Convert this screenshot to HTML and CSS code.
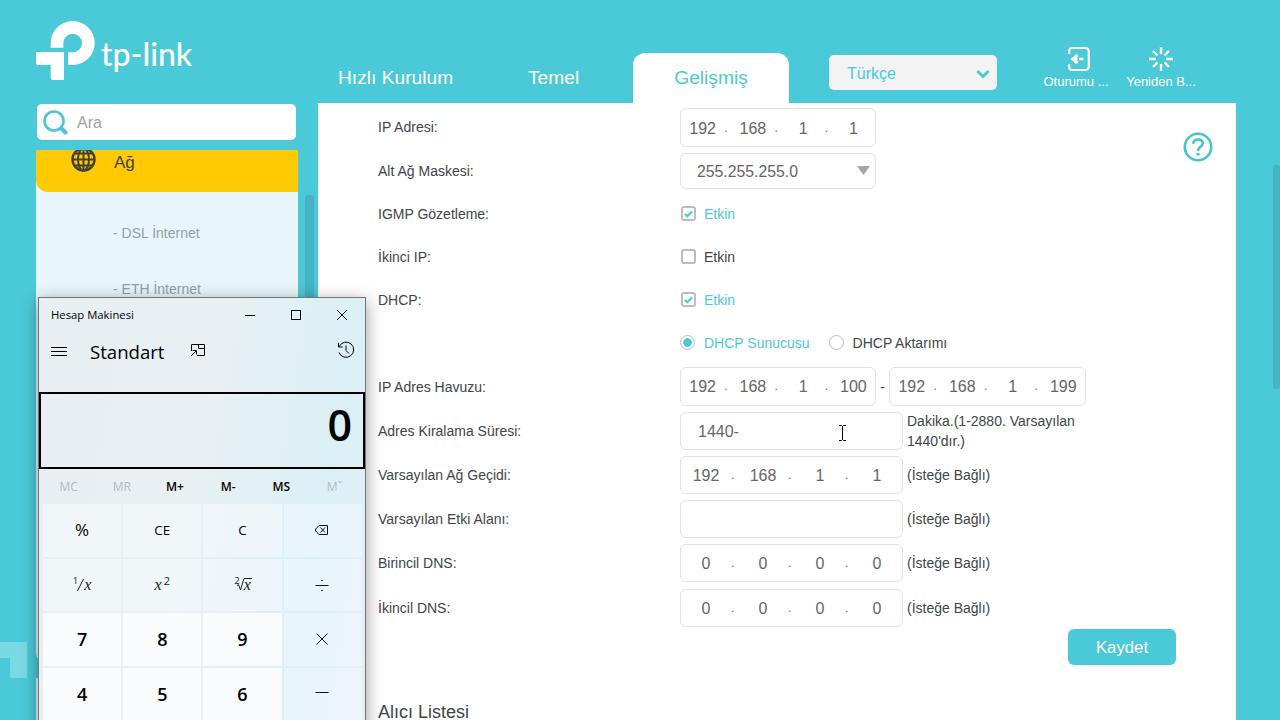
FILE: index.html
```html
<!DOCTYPE html>
<html lang="tr">
	<head>
		<meta charset="UTF-8">
		<meta content="width=device-width, initial-scale=1.0" name="viewport">
		<link rel="stylesheet" href="styles.css">
		<title>tp-link</title>
	</head>
	<body>
		<div class="page">
			<svg class="bg-mark" width="27" height="36" viewBox="0 0 27 36"><path d="M0 0H27V36H12Q10 36 10 34V16H0Z" fill="#7ADAE3"/></svg>
			<aside class="sidebar">
				<div class="logo">
					<svg width="60" height="60" viewBox="36 21 60 60" fill="#FFF">
						<path d="M50.7 47.7V43A22 22 0 1 1 72.7 65H68V52.3H72.7A9.3 9.3 0 1 0 63.4 43V47.7Z"/>
						<path d="M36 52H64V80H52.7Q50.7 80 50.7 78V65H38Q36 65 36 63Z"/>
					</svg>
					<span class="logo-text">tp-link</span>
				</div>
				<div class="search">
					<svg width="25" height="25" viewBox="0 0 25 25" fill="none" stroke="#4AC6D4"><circle cx="11" cy="11" r="9.5" stroke-width="2.6"/><path d="M18.5 18.5L22.5 22.5" stroke-width="4" stroke-linecap="round"/></svg>
					<span>Ara</span>
				</div>
				<nav class="menu">
					<div class="menu-head">
						<svg width="25" height="25" viewBox="0 0 25 25" fill="none" stroke="#3F4330" stroke-width="2"><circle cx="12.5" cy="12.5" r="11" stroke-width="2.4"/><ellipse cx="12.5" cy="12.5" rx="5.5" ry="11"/><path d="M12.5 1V24M1 12.5H24M3 6.5H22M3 18.5H22"/></svg>
						<span>Ağ</span>
					</div>
					<div class="menu-sub">
						<a>- DSL İnternet</a>
						<a>- ETH İnternet</a>
					</div>
				</nav>
				<div class="menu-next"></div>
			</aside>

			<main class="main">
				<header class="topbar">
					<a class="tab tab-quick">Hızlı Kurulum</a>
					<a class="tab tab-basic">Temel</a>
					<a class="tab tab-active">Gelişmiş</a>
					<div class="language">
						<span>Türkçe</span>
						<svg width="14" height="10" viewBox="0 0 14 10" fill="none" stroke="#4ACAD8" stroke-width="3"><path d="M1.5 2L7 7.5L12.5 2"/></svg>
					</div>
					<div class="action action-logout">
						<svg width="22" height="26" viewBox="0 0 22 26" fill="none" stroke="#FFF" stroke-width="2.2"><path d="M1.2 8V5Q1.2 2 4.2 2H17Q20.8 2 20.8 6V20Q20.8 24 17 24H4.2Q1.2 24 1.2 21V18"/><path d="M9.5 9L5 13L9.5 17" stroke-width="3.2"/><path d="M5 13H9.5M11 13H15.5" stroke-width="2.4"/></svg>
						<span>Oturumu ...</span>
					</div>
					<div class="action action-reboot">
						<svg width="26" height="26" viewBox="0 0 26 26" stroke="#FFF" stroke-width="2.4"><path d="M13 1V8M13 18V25M1 13H8M18 13H25M5 5L9.5 9.5M16.5 16.5L21 21M5 21L9.5 16.5M16.5 9.5L21 5"/></svg>
						<span>Yeniden B...</span>
					</div>
				</header>

				<section class="content">
					<div class="form">
						<div class="row row-up">
							<label>IP Adresi:</label>
							<div class="field ip"><b>192</b><i>.</i><b>168</b><i>.</i><b>1</b><i>.</i><b>1</b></div>
						</div>
						<div class="row">
							<label>Alt Ağ Maskesi:</label>
							<div class="field select"><span>255.255.255.0</span><svg width="13" height="9" viewBox="0 0 13 9"><path d="M0 0H13L6.5 9Z" fill="#A5A5A5"/></svg></div>
						</div>
						<div class="row row-up">
							<label>IGMP Gözetleme:</label>
							<span class="check checked"><svg width="9" height="8" viewBox="0 0 9 8"><path d="M1 4L3.3 6.2L8 1.5"/></svg></span><span class="option on">Etkin</span>
						</div>
						<div class="row row-up">
							<label>İkinci IP:</label>
							<span class="check"></span><span class="option">Etkin</span>
						</div>
						<div class="row row-up">
							<label>DHCP:</label>
							<span class="check checked"><svg width="9" height="8" viewBox="0 0 9 8"><path d="M1 4L3.3 6.2L8 1.5"/></svg></span><span class="option on">Etkin</span>
						</div>
						<div class="row row-up">
							<label></label>
							<span class="radio selected"></span><span class="option on server">DHCP Sunucusu</span>
							<span class="radio"></span><span class="option">DHCP Aktarımı</span>
						</div>
						<div class="row row-pool">
							<label>IP Adres Havuzu:</label>
							<div class="field ip"><b>192</b><i>.</i><b>168</b><i>.</i><b>1</b><i>.</i><b>100</b></div>
							<span class="dash">-</span>
							<div class="field ip last"><b>192</b><i>.</i><b>168</b><i>.</i><b>1</b><i>.</i><b>199</b></div>
						</div>
						<div class="row">
							<label>Adres Kiralama Süresi:</label>
							<div class="field wide text">1440-</div>
							<span class="note">Dakika.(1-2880. Varsayılan 1440'dır.)</span>
						</div>
						<div class="row row-gateway">
							<label>Varsayılan Ağ Geçidi:</label>
							<div class="field wide ip"><b>192</b><i>.</i><b>168</b><i>.</i><b>1</b><i>.</i><b>1</b></div>
							<span class="note">(İsteğe Bağlı)</span>
						</div>
						<div class="row">
							<label>Varsayılan Etki Alanı:</label>
							<div class="field wide text"></div>
							<span class="note">(İsteğe Bağlı)</span>
						</div>
						<div class="row">
							<label>Birincil DNS:</label>
							<div class="field wide ip"><b>0</b><i>.</i><b>0</b><i>.</i><b>0</b><i>.</i><b>0</b></div>
							<span class="note">(İsteğe Bağlı)</span>
						</div>
						<div class="row">
							<label>İkincil DNS:</label>
							<div class="field wide ip"><b>0</b><i>.</i><b>0</b><i>.</i><b>0</b><i>.</i><b>0</b></div>
							<span class="note">(İsteğe Bağlı)</span>
						</div>
					</div>
					<button class="save" type="button">Kaydet</button>
					<h2>Alıcı Listesi</h2>
					<svg class="help" width="30" height="30" viewBox="0 0 30 30" fill="none" stroke="#4AC3D0" stroke-width="2.6"><circle cx="15" cy="15" r="13.2"/><path d="M10.2 11.8Q10.4 7.5 15 7.5Q19.8 7.5 19.8 11.3Q19.8 13.4 17.4 14.9Q15 16.4 15 19"/><path d="M15 21V23.6" stroke-width="3"/></svg>
				</section>
			</main>
			<div class="scroll scroll-menu"></div>
			<div class="scroll scroll-page"></div>
		</div>

		<div class="calculator">
			<div class="calc-title">
				<span>Hesap Makinesi</span>
				<svg width="104" height="12" viewBox="0 0 104 12" fill="none" stroke="#000"><path d="M1 6.5H11"/><rect x="47.5" y="1.5" width="9" height="9"/><path d="M93 1L103 11M103 1L93 11"/></svg>
			</div>
			<div class="calc-mode">
				<svg width="16" height="11" viewBox="0 0 16 11" stroke="#000"><path d="M0 1.5H16M0 5.5H16M0 9.5H16"/></svg>
				<span>Standart</span>
				<svg class="on-top" width="16" height="14" viewBox="0 0 16 14" fill="none" stroke="#000"><path d="M1.5 8V1.5H14.5V12.5H7M8.5 1.5V5.5H14.5M1 13L6 8M2.5 7.5H6.5V11.5"/></svg>
				<svg class="history" width="18" height="18" viewBox="0 0 18 18" fill="none" stroke="#000"><path d="M2.2 5.5A7.6 7.6 0 1 1 2 11.5M1.5 1.8V6H5.7M9 4.5V9.5L12 12.5"/></svg>
			</div>
			<div class="calc-display">0</div>
			<div class="calc-memory">
				<span class="off">MC</span><span class="off">MR</span><span>M+</span><span>M-</span><span>MS</span><span class="off">M<small>ˇ</small></span>
			</div>
			<div class="calc-keys">
				<div class="key percent">%</div>
				<div class="key">CE</div>
				<div class="key">C</div>
				<div class="key op"><svg width="15" height="12" viewBox="0 0 15 12" fill="none" stroke="#111"><path d="M5 1.5H13.5V10.5H5L1 6ZM6.5 3.5L11 8.5M11 3.5L6.5 8.5"/></svg></div>
				<div class="key math"><sup>1</sup><svg class="slash" width="7" height="12" viewBox="0 0 7 12" stroke="#222"><path d="M0.5 12L6.5 0"/></svg><em>x</em></div>
				<div class="key math square"><em>x</em><sup>2</sup></div>
				<div class="key math"><sup>2</sup><svg class="root" width="15" height="13" viewBox="0 0 15 13" fill="none" stroke="#222"><path d="M0 7.5L1.5 6.5L3.5 12L7 0.5H15"/></svg><em class="under-root">x</em></div>
				<div class="key op"><svg width="14" height="14" viewBox="0 0 14 14" stroke="#111" fill="#111"><path d="M0.5 7.5H13.5"/><circle cx="7" cy="2.5" r="0.4"/><circle cx="7" cy="12.5" r="0.4"/></svg></div>
				<div class="key num">7</div>
				<div class="key num">8</div>
				<div class="key num">9</div>
				<div class="key op"><svg width="12" height="12" viewBox="0 0 12 12" stroke="#111"><path d="M0.5 0.5L11.5 11.5M11.5 0.5L0.5 11.5"/></svg></div>
				<div class="key num">4</div>
				<div class="key num">5</div>
				<div class="key num">6</div>
				<div class="key op"><svg width="14" height="3" viewBox="0 0 14 3" stroke="#111"><path d="M0.5 0.5H13.5"/></svg></div>
			</div>
		</div>
		<svg class="cursor" width="7" height="16" viewBox="0 0 7 16" fill="none" stroke="#000"><path d="M0 0.5H2.5L3.5 1.5L4.5 0.5H7M3.5 1V15M0 15.5H2.5L3.5 14.5L4.5 15.5H7"/></svg>
	</body>
</html>
```
FILE: styles.css
```css
* {
    box-sizing: border-box;
}

body {
    position: relative;
    margin: 0;
    width: 1280px;
    height: 720px;
    overflow: hidden;
    background-color: #4ACAD8;
    font-family: 'Liberation Sans', Arial, sans-serif;
    font-size: 14px;
    color: #404548;
}

svg {
    display: block;
    flex: none;
}

.page {
    display: flex;
    height: 720px;
}

.bg-mark {
    position: absolute;
    left: 0;
    top: 642px;
}

/* sidebar */
.sidebar {
    display: flex;
    flex-direction: column;
    width: 318px;
    padding-left: 36px;
}

.logo {
    display: flex;
    height: 104px;
    padding-top: 21px;
}

.logo-text {
    margin: 10px 0 0 5px;
    color: #FFF;
    font-family: Lato, sans-serif;
    font-size: 32px;
    line-height: 46px;
    font-weight: 500;
}

.search {
    display: flex;
    align-items: center;
    width: 259px;
    height: 36px;
    margin: 0 0 10px 1px;
    padding-left: 6px;
    background-color: #FFF;
    border-radius: 5px;
    font-size: 16px;
    color: #A2A2A8;
}

.search span {
    margin: 1px 0 0 9px;
}

.menu {
    width: 262px;
    height: 513px;
    overflow: hidden;
    background-color: #E8F6FC;
    border-radius: 0 0 10px 10px;
}

.menu-head {
    display: flex;
    align-items: flex-start;
    height: 42px;
    padding-left: 35px;
    background-color: #FFC903;
    border-bottom-left-radius: 12px;
    font-size: 17px;
}

.menu-head svg {
    margin-top: -3px;
}

.menu-head span {
    margin: 3px 0 0 18px;
}

.menu-sub a {
    display: block;
    height: 56px;
    padding: 33px 0 0 77px;
    color: #8FA0A5;
}

.menu-next {
    width: 262px;
    height: 42px;
    margin-top: 15px;
    background-color: #E8F6FC;
}

/* header */
.main {
    width: 918px;
}

.topbar {
    display: flex;
    height: 103px;
    color: #FFF;
}

.tab {
    padding-top: 67px;
    font-size: 19.2px;
    line-height: 22px;
}

.tab-quick {
    width: 190px;
    padding-left: 20px;
}

.tab-basic {
    width: 125px;
    padding-left: 20px;
}

.tab-active {
    width: 156px;
    height: 50px;
    margin-top: 53px;
    padding-top: 14px;
    background-color: #FFF;
    border-radius: 12px 12px 0 0;
    text-align: center;
    color: #4ACAD8;
}

.language {
    display: flex;
    align-items: center;
    justify-content: space-between;
    width: 168px;
    height: 35px;
    margin: 55px 0 0 40px;
    padding: 2px 7px 0 18px;
    background-color: #F3F3F3;
    border-radius: 5px;
    font-size: 16px;
    color: #4ACAD8;
}

.action {
    display: flex;
    flex-direction: column;
    align-items: center;
    width: 84px;
    padding-top: 46px;
    font-size: 13px;
    line-height: 20px;
    white-space: nowrap;
}

.action svg {
    height: 26px;
}

.action-logout {
    width: 82px;
    margin-left: 38px;
}

.action-logout svg {
    margin-left: 6px;
}

.action-reboot {
    margin-left: 2px;
}

/* settings form */
.content {
    position: relative;
    display: flex;
    flex-direction: column;
    height: 617px;
    padding: 3px 60px 0;
    background-color: #FFF;
}

.form {
    display: grid;
    grid-template-rows: 43px 44px repeat(4, 43px) repeat(5, 44px) 45px;
}

.row {
    display: flex;
    align-items: center;
}

.row label {
    width: 302px;
}

.row-up label,
.row-up .option,
.row-up .check,
.row-up .radio {
    margin-bottom: 2px;
}

.row-pool .field {
    margin-bottom: 2px;
}

.row-gateway label,
.row-gateway .note,
.row-gateway .field {
    margin-bottom: 1px;
}

.field {
    display: flex;
    align-items: center;
    width: 196px;
    height: 39px;
    border: 1px solid #E2E2E4;
    border-radius: 6px;
    font-size: 16px;
    color: #666;
}

.field.wide {
    width: 223px;
    height: 38px;
}

.field.last {
    width: 197px;
}

.ip b {
    flex: 1;
    padding-top: 2px;
    font-weight: normal;
    text-align: center;
}

.ip i {
    width: 7px;
    font-size: 12px;
    font-style: normal;
}

.select {
    height: 36px;
    justify-content: space-between;
    padding: 0 5px 0 16px;
    font-size: 15.8px;
}

.select span {
    margin-top: 1px;
}

.select svg {
    margin-top: -2px;
}

.text {
    padding: 1px 0 0 17px;
}

.note {
    width: 190px;
    margin-left: 4px;
    line-height: 20px;
}

.dash {
    width: 13px;
    text-align: center;
}

.check,
.radio {
    display: flex;
    align-items: center;
    justify-content: center;
    width: 15px;
    height: 15px;
    margin-right: 8px;
    border: 2px solid #BDBDC0;
    border-radius: 3px;
}

.check {
    margin-left: 1px;
}

.check path {
    fill: none;
    stroke: #4ACAD8;
    stroke-width: 2.2;
}

.radio {
    margin-right: 9px;
    border-width: 1.5px;
    border-radius: 50%;
}

.radio.selected {
    background: radial-gradient(circle, #4ACAD8 0 4px, #FFF 4.6px);
}

.option.on {
    color: #4ACAD8;
}

.server {
    margin-right: 19px;
}

.save {
    flex: none;
    align-self: flex-end;
    width: 108px;
    height: 36px;
    margin-top: -1px;
    padding-top: 3px;
    border: none;
    border-radius: 6px;
    background-color: #4ACAD8;
    color: #FFF;
    font-family: inherit;
    font-size: 16.8px;
}

h2 {
    flex: none;
    margin: 37px 0 0;
    font-size: 18px;
    line-height: 20px;
    font-weight: normal;
    white-space: nowrap;
}

.help {
    position: absolute;
    right: 23px;
    top: 29px;
}

.scroll {
    position: absolute;
    background-color: #44B4C3;
    border-radius: 3px;
}

.scroll-menu {
    left: 305px;
    top: 195px;
    width: 9px;
    height: 180px;
}

.scroll-page {
    left: 1273px;
    top: 165px;
    width: 7px;
    height: 224px;
}

/* calculator window */
.calculator {
    position: absolute;
    left: 38px;
    top: 297px;
    width: 328px;
    height: 440px;
    border: 1px solid #6D767B;
    background: linear-gradient(100deg, #E8EFF2 0%, #E9F0F3 45%, #DAF0F6 80%, #E7EFF4 100%);
    box-shadow: 0 4px 16px rgba(0, 0, 0, 0.4);
    font-family: 'Open Sans', sans-serif;
    color: #000;
}

.calc-title {
    display: flex;
    align-items: center;
    justify-content: space-between;
    height: 33px;
    padding: 0 17px 0 12px;
    font-size: 11.3px;
}

.calc-mode {
    display: flex;
    align-items: center;
    height: 40px;
    padding: 0 10px 0 12px;
    font-size: 18.6px;
}

.calc-mode span {
    width: 74px;
    margin: 0 26px 0 23px;
}

.on-top,
.history {
    margin-top: -2px;
}

.history {
    margin-left: auto;
}

.calc-display {
    height: 77px;
    margin-top: 21px;
    padding-right: 11px;
    border: 2px solid #000;
    font-size: 43px;
    line-height: 62px;
    font-weight: 600;
    text-align: right;
}

.calc-memory {
    display: grid;
    grid-template-columns: repeat(6, 53.2px);
    align-items: center;
    height: 35px;
    padding-left: 3px;
    font-size: 12px;
    font-weight: 600;
    text-align: center;
}

.calc-memory .off {
    font-weight: normal;
    color: #B3BBBF;
}

.calc-memory small {
    font-size: 12px;
}

.calc-keys {
    display: grid;
    grid-template-columns: repeat(4, 78.2px);
    grid-auto-rows: 52.5px;
    gap: 2px;
    padding-left: 4px;
}

.key {
    display: flex;
    align-items: center;
    justify-content: center;
    background-color: rgba(247, 250, 253, 0.6);
    font-size: 13.5px;
}

.key.num {
    background-color: #FAFBFD;
    font-size: 18px;
    font-weight: 600;
}

.key.op {
    padding-right: 2px;
    background-color: rgba(240, 247, 253, 0.65);
}

.key.percent {
    padding-bottom: 2px;
    font-size: 17px;
}

.math {
    font-family: 'Liberation Serif', serif;
    font-size: 16px;
    color: #222;
}

.math sup {
    margin-bottom: 7px;
    font-family: 'Open Sans', sans-serif;
    font-size: 9.5px;
    line-height: 10px;
}

.square sup {
    margin-left: 2px;
    font-size: 11px;
}

.slash {
    margin-left: -1px;
}

.root {
    margin: 0 -8px 0 -3px;
}

.cursor {
    position: absolute;
    left: 839px;
    top: 425px;
}
```
